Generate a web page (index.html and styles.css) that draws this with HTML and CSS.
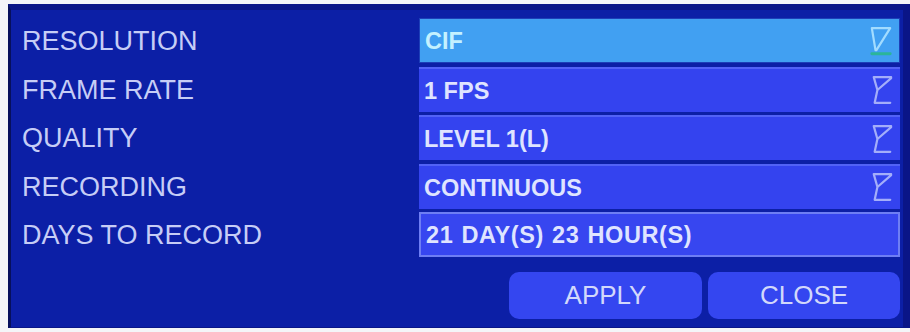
FILE: index.html
```html
<!DOCTYPE html>
<html>
<head>
<meta charset="utf-8">
<link rel="stylesheet" href="styles.css">
</head>
<body>
<div class="panel">
  <div class="rows">
    <div class="row">
      <div class="label">RESOLUTION</div>
      <div class="field sel"><span class="val">CIF</span>
        <svg class="dd" viewBox="0 0 24 34"><path d="M2 3 H22 L7 27 M2 3 L6 27" /><path class="ul" d="M2 31 H22" /></svg>
      </div>
    </div>
    <div class="row">
      <div class="label">FRAME RATE</div>
      <div class="field"><span class="val">1 FPS</span>
        <svg class="dd" viewBox="0 0 24 34"><path d="M3 3 H22 M22 4 L7 17 M3 3 L7 17 L4 31 H21" /></svg>
      </div>
    </div>
    <div class="row">
      <div class="label">QUALITY</div>
      <div class="field"><span class="val">LEVEL 1(L)</span>
        <svg class="dd" viewBox="0 0 24 34"><path d="M3 3 H22 M22 4 L7 17 M3 3 L7 17 L4 31 H21" /></svg>
      </div>
    </div>
    <div class="row">
      <div class="label">RECORDING</div>
      <div class="field"><span class="val">CONTINUOUS</span>
        <svg class="dd" viewBox="0 0 24 34"><path d="M3 3 H22 M22 4 L7 17 M3 3 L7 17 L4 31 H21" /></svg>
      </div>
    </div>
    <div class="row">
      <div class="label">DAYS TO RECORD</div>
      <div class="field info"><span class="val wide">21 DAY(S) 23 HOUR(S)</span></div>
    </div>
  </div>
  <div class="buttons">
    <div class="btn">APPLY</div>
    <div class="btn">CLOSE</div>
  </div>
</div>
</body>
</html>
```
FILE: styles.css
```css
html, body {
  margin: 0;
  padding: 0;
  background: #f4f5f8;
}
body {
  width: 910px;
  height: 332px;
  overflow: hidden;
  font-family: "Liberation Sans", Arial, sans-serif;
}
.panel {
  margin: 4px 0 0 8px;
  width: 878px;
  background: #0c1fa6;
  border-left: 3px solid #07105c;
  border-top: 6px solid #0a1688;
  border-right: 7px solid #0a1587;
  border-bottom: 1px solid #0a1688;
  padding: 8px 3px 8px 11px;
  display: flex;
  flex-direction: column;
}
.rows {
  display: flex;
  flex-direction: column;
  gap: 3.5px;
}
.row {
  display: grid;
  grid-template-columns: 397px 481px;
  height: 45px;
  align-items: center;
}
.label {
  color: #c6cdf6;
  font-size: 27px;
  padding-top: 2px;
}
.field {
  height: 45px;
  box-sizing: border-box;
  background: #3443ef;
  border-top: 2px solid #5262f6;
  display: flex;
  align-items: center;
  justify-content: space-between;
  padding: 0 7px 0 5px;
}
.field .val {
  color: #dfe4ff;
  font-size: 23.5px;
  font-weight: bold;
  padding-top: 2px;
}
.field .val.wide {
  letter-spacing: 0.6px;
  word-spacing: 1px;
}
.field.sel {
  background: #41a0f2;
  border: 1px solid #1d3fb8;
}
.field.sel .val {
  color: #c4f1ff;
}
.field.info {
  border: 2px solid #6e7ef4;
  background: #3746f0;
}
.dd {
  width: 22px;
  height: 34px;
  fill: none;
  stroke: #a4aefa;
  stroke-width: 2.4;
  stroke-linejoin: round;
  stroke-linecap: round;
}
.sel .dd {
  stroke: #a2dcff;
}
.sel .dd .ul {
  stroke: #2bb59a;
  stroke-width: 3.2;
}
.buttons {
  display: flex;
  justify-content: flex-end;
  gap: 6px;
  margin-top: 15px;
}
.btn {
  width: 193px;
  height: 47px;
  border-radius: 10px;
  background: #3446f0;
  color: #d2d8fb;
  font-size: 26px;
  display: flex;
  align-items: center;
  justify-content: center;
}
.btn + .btn {
  width: 192px;
}
```
